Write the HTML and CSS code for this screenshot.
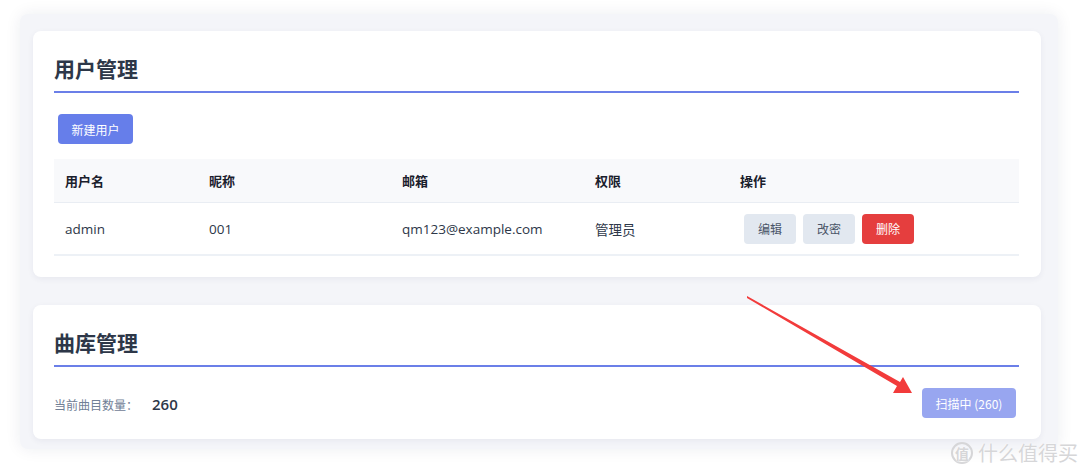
FILE: index.html
```html
<!DOCTYPE html>
<html lang="zh-CN">
<head>
<meta charset="utf-8">
<title>管理</title>
<link rel="stylesheet" href="styles.css">
</head>
<body>
<div class="panel">
  <section class="card">
    <h2 class="card-title">用户管理</h2>
    <button class="btn btn-primary btn-new">新建用户</button>
    <table class="user-table">
      <colgroup>
        <col class="c1"><col class="c2"><col class="c3"><col class="c4"><col class="c5">
      </colgroup>
      <thead>
        <tr><th>用户名</th><th>昵称</th><th>邮箱</th><th>权限</th><th>操作</th></tr>
      </thead>
      <tbody>
        <tr>
          <td>admin</td>
          <td>001</td>
          <td>qm123@example.com</td>
          <td>管理员</td>
          <td>
            <div class="actions">
              <button class="btn btn-gray">编辑</button>
              <button class="btn btn-gray">改密</button>
              <button class="btn btn-danger">删除</button>
            </div>
          </td>
        </tr>
      </tbody>
    </table>
  </section>
  <section class="card card-lib">
    <h2 class="card-title">曲库管理</h2>
    <div class="lib-row">
      <div class="count"><span class="count-label">当前曲目数量：</span><span class="count-num">260</span></div>
      <button class="btn btn-scanning">扫描中 (260)</button>
    </div>
  </section>
</div>

<svg class="arrow" width="1080" height="472" viewBox="0 0 1080 472">
  <polygon points="747,296 900,382 903,377 912,393 893,393 897,386 747,298" fill="#f23b3b"/>
</svg>

<div class="watermark"><span class="wm-logo">值</span><span class="wm-text">什么值得买</span></div>
</body>
</html>
```

FILE: styles.css
```css
html, body {
  margin: 0;
  padding: 0;
  background: #ffffff;
}
body {
  font-family: "Open Sans", "Noto Sans CJK SC", sans-serif;
  color: #2d3748;
  width: 1080px;
  height: 472px;
  overflow: hidden;
  position: relative;
}
.panel {
  margin: 14px 22px 0 20px;
  padding: 17px 17px 10px 13px;
  background: #f4f5f9;
  border-radius: 8px;
  box-shadow: 0 0 16px rgba(30, 40, 80, 0.08);
  display: flex;
  flex-direction: column;
  gap: 28px;
}
.card {
  background: #ffffff;
  border-radius: 8px;
  box-shadow: 0 2px 6px rgba(30, 40, 80, 0.06);
  padding: 23px 22px 21px 21px;
}
.card-title {
  margin: 0;
  font-family: "Noto Sans CJK SC", sans-serif;
  font-size: 21px;
  line-height: 28px;
  font-weight: 700;
  color: #2d3748;
  padding-bottom: 9px;
  border-bottom: 2px solid #6b7fe8;
}
.btn {
  font-family: "Noto Sans CJK SC", sans-serif;
  font-size: 12px;
  height: 30px;
  border: none;
  border-radius: 4px;
  padding: 0 14px;
  cursor: pointer;
}
.btn-primary {
  background: #667eea;
  color: #ffffff;
}
.btn-new {
  margin: 21px 0 0 4px;
  width: 75px;
  padding: 0;
}
.user-table {
  margin-top: 15px;
  width: 965px;
  border-collapse: collapse;
  table-layout: fixed;
}
.c1 { width: 144px; }
.c2 { width: 193px; }
.c3 { width: 193px; }
.c4 { width: 145px; }
.c5 { width: 290px; }
.user-table th {
  background: #f8f9fb;
  height: 43px;
  padding: 0 11px;
  text-align: left;
  font-family: "Noto Sans CJK SC", sans-serif;
  font-size: 13px;
  font-weight: 700;
  color: #1a202c;
  border-bottom: 1px solid #e9edf3;
}
.user-table td {
  height: 51px;
  padding: 0 11px;
  font-size: 13.5px;
  color: #2d3748;
  border-bottom: 2px solid #edf1f6;
  font-family: "Open Sans", "Noto Sans CJK SC", sans-serif;
}
.actions {
  display: flex;
  gap: 7px;
  padding-left: 4px;
}
.actions .btn {
  width: 52px;
  padding: 0;
}
.btn-gray {
  background: #e2e8f0;
  color: #4a5568;
}
.btn-danger {
  background: #e53e3e;
  color: #ffffff;
}
.lib-row {
  margin-top: 21px;
  display: flex;
  align-items: center;
  justify-content: space-between;
  padding-right: 3px;
}
.count {
  display: flex;
  align-items: baseline;
  gap: 14px;
  padding-top: 2px;
}
.count-label {
  font-family: "Noto Sans CJK SC", sans-serif;
  font-size: 12px;
  color: #718096;
}
.count-num {
  font-family: "Open Sans", sans-serif;
  font-size: 15px;
  font-weight: 600;
  color: #2d3748;
}
.btn-scanning {
  background: #98a6f0;
  color: #ffffff;
  width: 94px;
  padding: 0;
}
.arrow {
  position: absolute;
  left: 0;
  top: 0;
  pointer-events: none;
}
.watermark {
  position: absolute;
  left: 951px;
  top: 438px;
  display: flex;
  align-items: center;
  gap: 5px;
  font-family: "Noto Sans CJK SC", sans-serif;
  color: #d6d6d8;
  text-shadow: 0 0 2px #ffffff, 0 0 1px #ffffff;
}
.wm-logo {
  width: 22px;
  height: 22px;
  border: 2px solid #d6d6d8;
  border-radius: 50%;
  box-sizing: border-box;
  display: flex;
  align-items: center;
  justify-content: center;
  font-size: 14px;
  font-weight: 700;
  color: #d6d6d8;
}
.wm-text {
  font-size: 20px;
  letter-spacing: 0px;
}
```
